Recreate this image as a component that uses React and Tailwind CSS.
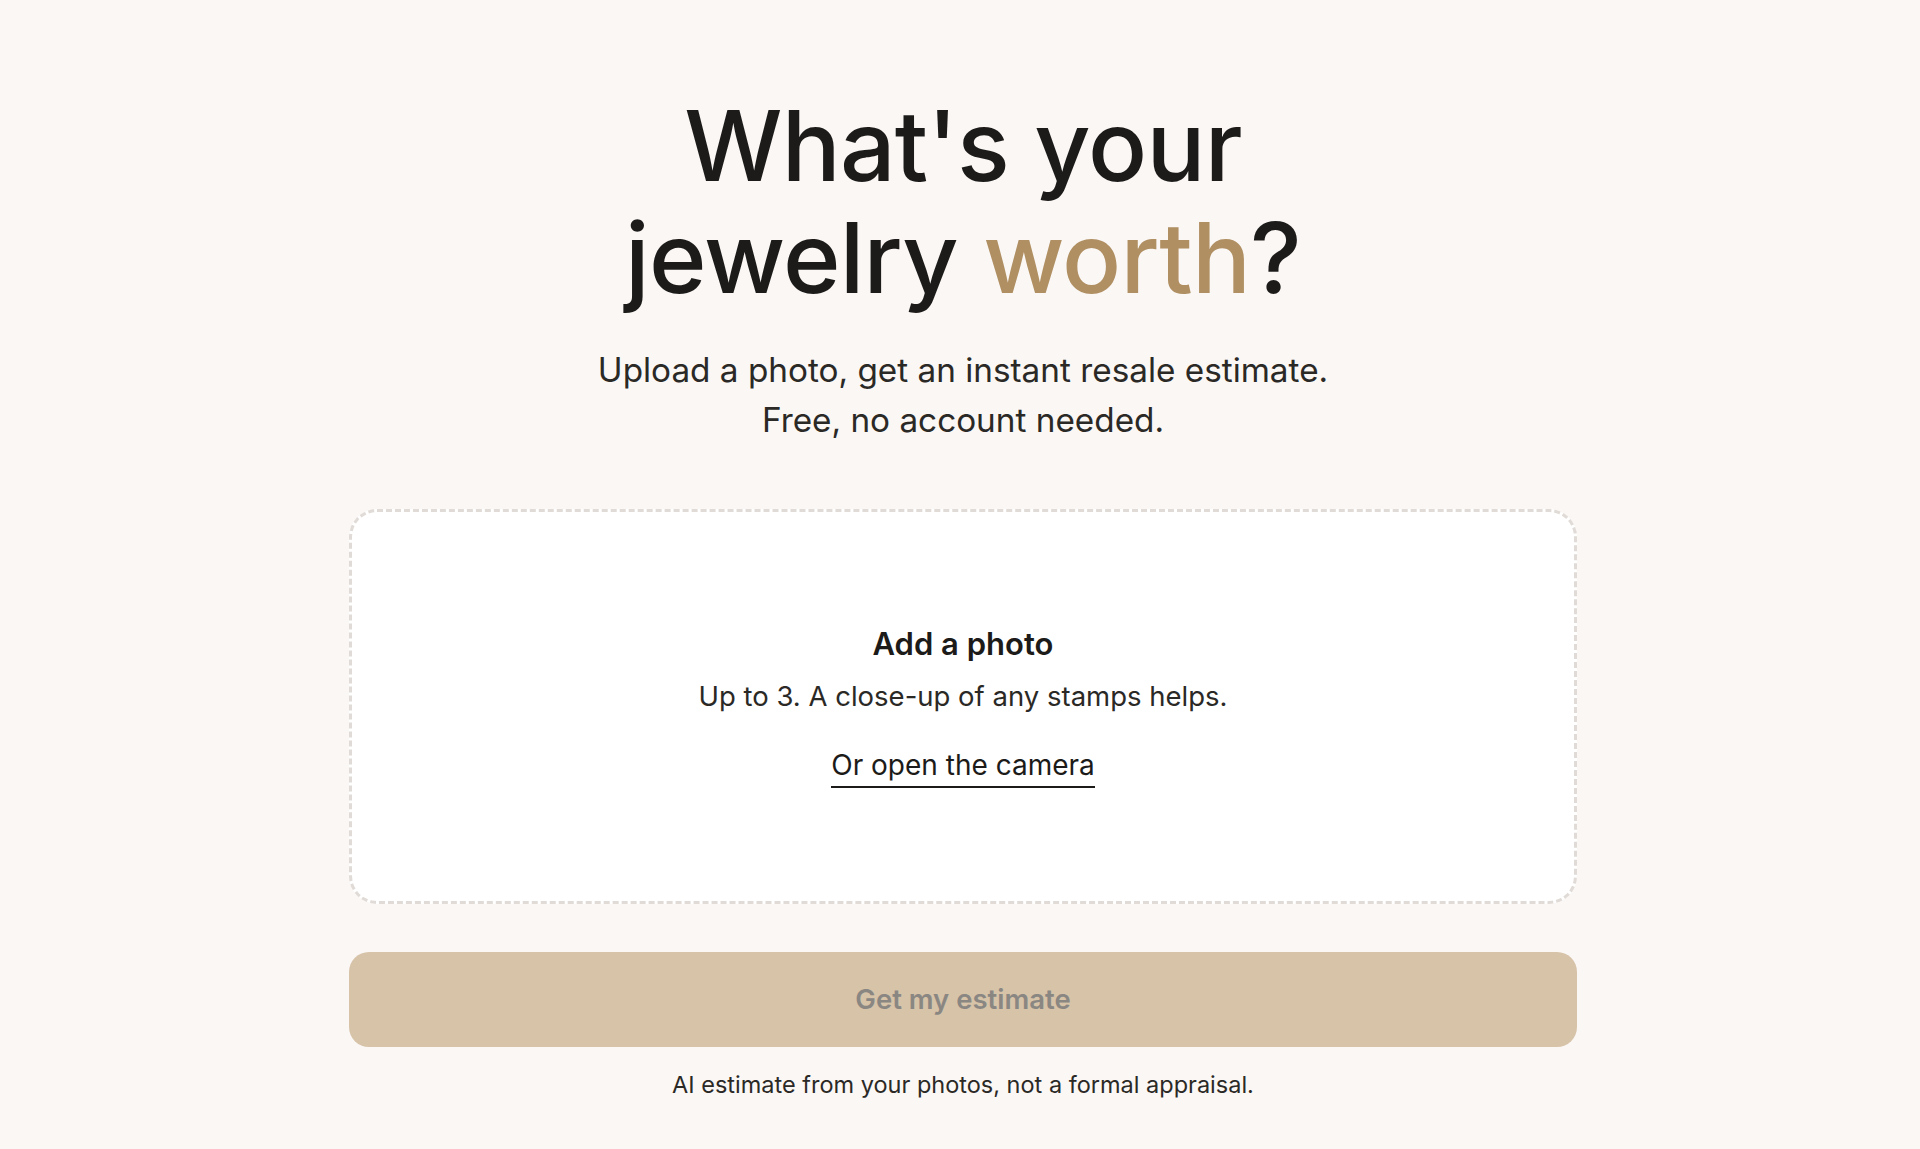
import React from "react";

export default function App() {
  return (
    <div className="min-h-screen bg-[#faf7f5] font-['Inter','Noto_Sans',sans-serif] flex flex-col items-center pt-[90px] pb-[40px] pl-[6px]">
      <h1 className="text-[98px] leading-[112px] font-medium tracking-[-0.008em] text-[#1c1b19] text-center">
        What's your
        <br />
        jewelry <span className="text-[#b08f62]">worth</span>?
      </h1>
      <p className="mt-[31px] text-[33.3px] leading-[50px] text-[#2b2926] text-center">
        Upload a photo, get an instant resale estimate.
        <br />
        Free, no account needed.
      </p>
      <div className="mt-[64px] w-[1228px] h-[395px] rounded-[28px] border-[3px] border-dashed border-[#e0dbd6] bg-white flex flex-col items-center justify-center">
        <div className="text-[31px] leading-[36px] font-semibold text-[#1c1b19]">Add a photo</div>
        <div className="mt-[18px] text-[27.5px] leading-[32px] text-[#2b2926]">
          Up to 3. A close-up of any stamps helps.
        </div>
        <button className="mt-[39px] text-[28px] leading-[28px] font-normal text-[#1c1b19] border-b-2 border-[#1c1b19] pb-[7px]">
          Or open the camera
        </button>
      </div>
      <button className="mt-[48px] w-[1228px] h-[95px] rounded-[20px] bg-[#d7c3a8] text-[#8a8783] text-[27.5px] font-semibold">
        Get my estimate
      </button>
      <p className="mt-[22px] text-[23.5px] leading-[32px] text-[#2b2926]">
        AI estimate from your photos, not a formal appraisal.
      </p>
    </div>
  );
}
